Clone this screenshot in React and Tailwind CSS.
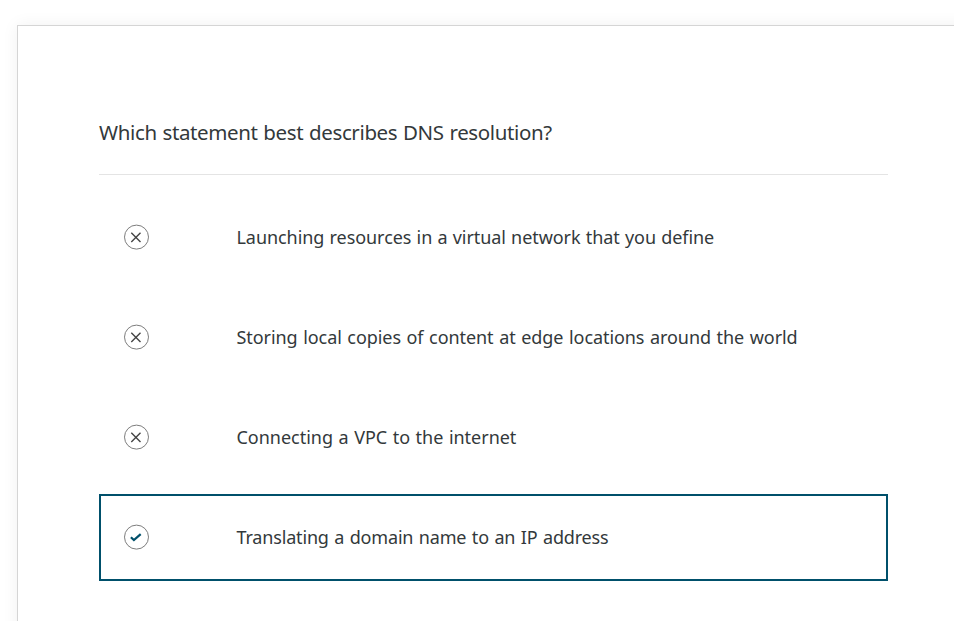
import React from "react";

const answers = [
  { text: "Launching resources in a virtual network that you define", tracking: "tracking-[-0.06px] [word-spacing:0.6px]" },
  { text: "Storing local copies of content at edge locations around the world", tracking: "tracking-[-0.07px] [word-spacing:1px]" },
  { text: "Connecting a VPC to the internet", tracking: "tracking-[-0.02px] [word-spacing:0.9px]" },
  { text: "Translating a domain name to an IP address", tracking: "tracking-[-0.17px] [word-spacing:1px]", correct: true },
];

function StatusIcon({ correct }) {
  return (
    <svg viewBox="0 0 26 26" className="h-[26px] w-[26px] shrink-0" fill="none">
      <circle cx="13.5" cy="13.1" r="12" stroke="#7d7d7d" strokeWidth="1" />
      {correct ? (
        <path d="M7.9 13.2 L10.9 16 L17.7 10.2" stroke="#00506b" strokeWidth="2.2" />
      ) : (
        <path d="M8.3 8.7 L17.5 17.9 M17.5 8.7 L8.3 17.9" stroke="#444444" strokeWidth="1.4" />
      )}
    </svg>
  );
}

function Answer({ text, tracking, correct }) {
  return (
    <li
      className={`flex h-[87px] items-center border-2 pb-[2px] pl-[22px] ${
        correct ? "border-[#00506b]" : "border-transparent"
      }`}
    >
      <StatusIcon correct={correct} />
      <span className={`ml-[87.5px] text-[18px] leading-7 whitespace-nowrap ${tracking}`}>{text}</span>
    </li>
  );
}

export default function App() {
  return (
    <div className="h-[621px] w-[954px] overflow-hidden bg-white pt-[25px] pl-[17px] font-['Noto_Sans',sans-serif] text-[#33393b]">
      <main className="h-[700px] w-[1000px] border border-[#d5d5d5] bg-white pt-[88px] pl-[81px] shadow-[0_0_16px_rgba(0,0,0,0.06)]">
        <h1 className="h-[61px] w-[789px] border-b border-[#e4e4e4] text-[20.5px] leading-[36px] font-normal whitespace-nowrap tracking-[-0.37px] [word-spacing:0.8px]">
          Which statement best describes DNS resolution?
        </h1>
        <ul className="mt-[19px] flex w-[789px] flex-col gap-[13px]">
          {answers.map((a) => (
            <Answer key={a.text} {...a} />
          ))}
        </ul>
      </main>
    </div>
  );
}
